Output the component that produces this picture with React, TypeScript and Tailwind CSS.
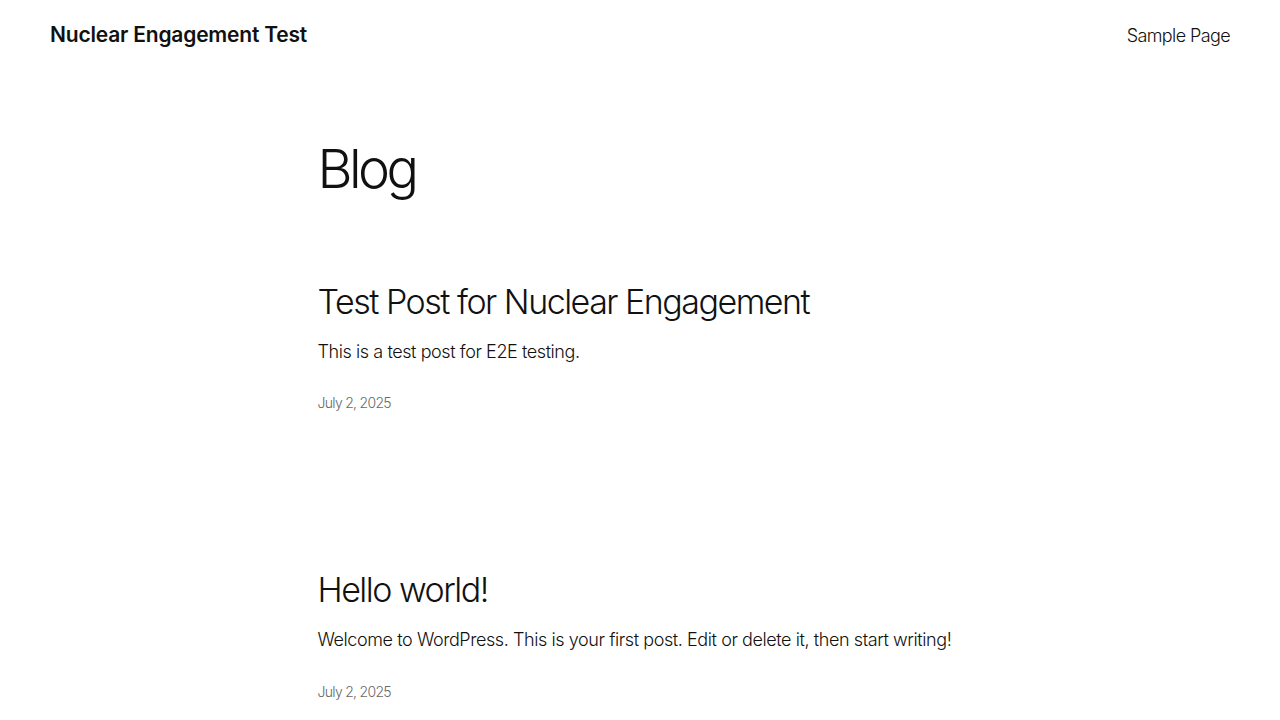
const posts = [
  {
    title: "Test Post for Nuclear Engagement",
    excerpt: "This is a test post for E2E testing.",
    date: "July 2, 2025",
  },
  {
    title: "Hello world!",
    excerpt:
      "Welcome to WordPress. This is your first post. Edit or delete it, then start writing!",
    date: "July 2, 2025",
  },
];

export default function App() {
  return (
    <div className="min-h-screen bg-white text-[#111111] font-['Inter',sans-serif]">
      <header className="flex h-[70px] items-center justify-between px-[50px]">
        <a className="text-[21px] font-semibold tracking-[-0.2px]">
          Nuclear Engagement Test
        </a>
        <nav>
          <a className="text-[18px] font-light tracking-[-0.6px]">Sample Page</a>
        </nav>
      </header>

      <main className="mx-auto w-[645px]">
        <h1 className="mt-[67px] text-[54px] font-light leading-[1.2] tracking-[-3.6px]">
          Blog
        </h1>

        <div className="mt-[80px]">
          {posts.map((post, i) => (
            <article key={i} className={i > 0 ? "mt-[157px]" : ""}>
              <h2 className="text-[34px] font-light leading-[1.2] tracking-[-1.5px]">
                {post.title}
              </h2>
              <p className="mt-[15px] text-[18px] font-light leading-[1.6] tracking-[-0.42px]">
                {post.excerpt}
              </p>
              <p className="mt-[26px] text-[14px] font-light tracking-[-0.7px] text-[#686868]">
                {post.date}
              </p>
            </article>
          ))}
        </div>
      </main>
    </div>
  );
}
